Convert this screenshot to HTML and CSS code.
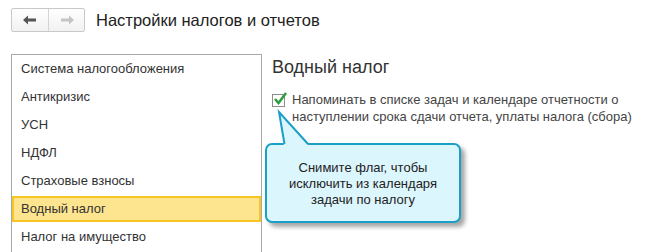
FILE: index.html
```html
<!DOCTYPE html>
<html lang="ru">
<head>
    <meta charset="UTF-8">
    <title>Настройки налогов и отчетов</title>
    <link rel="stylesheet" href="styles.css">
</head>
<body>
    <div class="header">
        <div class="nav">
            <button class="nav-btn">
                <svg width="14" height="10" viewBox="0 0 14 10"><path d="M0 5 L5 0.5 L5 3.5 L13 3.5 L13 6.5 L5 6.5 L5 9.5 Z" fill="#555"/></svg>
            </button>
            <button class="nav-btn">
                <svg width="14" height="10" viewBox="0 0 14 10"><path d="M14 5 L9 0.5 L9 3.5 L1 3.5 L1 6.5 L9 6.5 L9 9.5 Z" fill="#c4c4c4"/></svg>
            </button>
        </div>
        <h1 class="title">Настройки налогов и отчетов</h1>
    </div>

    <div class="content">
        <ul class="sections">
            <li>Система налогообложения</li>
            <li>Антикризис</li>
            <li>УСН</li>
            <li>НДФЛ</li>
            <li>Страховые взносы</li>
            <li class="active">Водный налог</li>
            <li>Налог на имущество</li>
        </ul>
        <div class="panel">
            <h2 class="panel-title">Водный налог</h2>
            <label class="check">
                <span class="box">
                    <svg width="16" height="16" viewBox="0 0 16 16"><path d="M3 8 L6.5 12 L14 2" fill="none" stroke="#2f9e3c" stroke-width="2.6" stroke-linejoin="miter"/></svg>
                </span>
                <span>Напоминать в списке задач и календаре отчетности о наступлении срока сдачи отчета, уплаты налога (сбора)</span>
            </label>
        </div>
    </div>

    <div class="hint">Снимите флаг, чтобы исключить из календаря задачи по налогу</div>
    <svg class="hint-tail" width="38" height="38" viewBox="0 0 38 38">
        <polygon points="5,3 10,37 35,37" fill="#dcf6fd"/>
        <polyline points="10.5,35 5,3 34,35" fill="none" stroke="#1b9fc6" stroke-width="2"/>
    </svg>
</body>
</html>
```

FILE: styles.css
```css
* {
    margin: 0;
    padding: 0;
    box-sizing: border-box;
}

html, body {
    overflow: hidden;
}

body {
    position: relative;
    width: 653px;
    height: 252px;
    background: #fff;
    font-family: "Liberation Sans", Arial, sans-serif;
    color: #333;
}

.header {
    display: flex;
    align-items: center;
    padding: 8px 11px 0;
    height: 32px;
}
.nav {
    display: flex;
    height: 24px;
    border: 1px solid #c9c9c9;
    border-radius: 2px;
    background: linear-gradient(#ffffff, #f1f1f1);
}
.nav-btn {
    width: 36px;
    height: 22px;
    border: none;
    background: none;
    display: flex;
    align-items: center;
    justify-content: center;
}
.nav-btn + .nav-btn {
    border-left: 1px solid #d4d4d4;
}
.title {
    margin-left: 11px;
    font-size: 16.5px;
    font-weight: normal;
    color: #222;
}

.content {
    display: flex;
    padding: 22px 0 0 11px;
}
.sections {
    flex: none;
    list-style: none;
    width: 251px;
    height: 198px;
    border: 1px solid #a8a8a8;
    border-bottom: none;
    padding-top: 1px;
    overflow: hidden;
}
.sections li {
    height: 26px;
    margin-bottom: 2px;
    padding-left: 9px;
    line-height: 26px;
    font-size: 13px;
    white-space: nowrap;
    color: #333;
}
.sections li.active {
    background: #fde48e;
    border: 2px solid #f7c623;
    padding-left: 7px;
    line-height: 22px;
}

.panel {
    width: 372px;
    padding: 3px 0 0 10px;
}
.panel-title {
    font-size: 18px;
    font-weight: normal;
    color: #333;
    margin-bottom: 13px;
}
.check {
    display: flex;
    align-items: flex-start;
    font-size: 13px;
    line-height: 17px;
    color: #444;
}
.box {
    position: relative;
    flex: none;
    width: 13px;
    height: 13px;
    margin: 3px 7px 0 0;
    border: 1px solid #8c8c8c;
    background: #fff;
}
.box svg {
    position: absolute;
    left: -1px;
    top: -4px;
}

.hint {
    position: absolute;
    left: 265px;
    top: 143px;
    width: 196px;
    height: 80px;
    padding: 15px 10px 0;
    border: 2px solid #1b9fc6;
    border-radius: 7px;
    background: #dcf6fd;
    box-shadow: 4px 4px 4px rgba(0, 0, 0, 0.35);
    text-align: center;
    font-size: 13px;
    line-height: 16px;
    color: #222;
}
.hint-tail {
    position: absolute;
    left: 274px;
    top: 109px;
}
```
